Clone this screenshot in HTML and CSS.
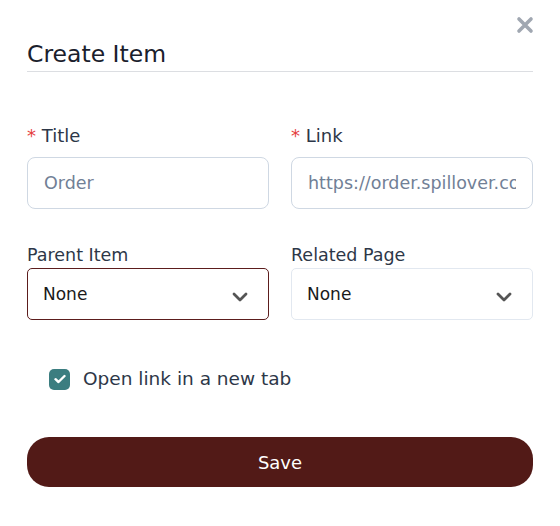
FILE: index.html
```html
<!DOCTYPE html>
<html lang="en">
<head>
  <meta charset="UTF-8" />
  <meta name="viewport" content="width=device-width, initial-scale=1.0" />
  <title>Create Item</title>
  <link rel="stylesheet" href="styles.css">
</head>
<body>
  <div class="modal">
    <button class="close" aria-label="Close">
      <svg width="18" height="18" viewBox="0 0 18 18">
        <path d="M3 3 L15 15 M15 3 L3 15" stroke="#a0a7b1" stroke-width="3.6" stroke-linecap="round" />
      </svg>
    </button>

    <div class="header">
      <h2>Create Item</h2>
    </div>

    <form class="form">
      <div class="field">
        <label><span class="req">*</span> Title</label>
        <input class="input" type="text" value="Order" />
      </div>
      <div class="field">
        <label><span class="req">*</span> Link</label>
        <input class="input" type="text" value="https://order.spillover.com/" />
      </div>

      <div class="field second">
        <label>Parent Item</label>
        <div class="select focused">
          <span>None</span>
          <svg class="chev" width="16" height="10" viewBox="0 0 16 10">
            <path d="M2 2 L8 8 L14 2" fill="none" stroke="#555" stroke-width="2.8" stroke-linecap="round" stroke-linejoin="round" />
          </svg>
        </div>
      </div>
      <div class="field second">
        <label>Related Page</label>
        <div class="select">
          <span>None</span>
          <svg class="chev" width="16" height="10" viewBox="0 0 16 10">
            <path d="M2 2 L8 8 L14 2" fill="none" stroke="#555" stroke-width="2.8" stroke-linecap="round" stroke-linejoin="round" />
          </svg>
        </div>
      </div>

      <label class="check">
        <span class="box">
          <svg width="12" height="10" viewBox="0 0 12 10">
            <path d="M1.5 5.2 L4.5 8 L10.5 2" fill="none" stroke="#fff" stroke-width="2.4" stroke-linecap="round" stroke-linejoin="round" />
          </svg>
        </span>
        Open link in a new tab
      </label>

      <button type="button" class="save">Save</button>
    </form>
  </div>
</body>
</html>
```

FILE: styles.css
```css
body {
  font-family: "DejaVu Sans", sans-serif;
  background: #ffffff;
  color: #2d3748;
  margin: 0;
}

.modal {
  position: relative;
  width: 506px;
  padding: 38px 27px 0;
}

.close {
  position: absolute;
  top: 16px;
  right: 26px;
  background: none;
  border: none;
  padding: 0;
  cursor: pointer;
  line-height: 0;
}

.header {
  border-bottom: 1px solid #dcdee2;
  padding-bottom: 1px;
}
.header h2 {
  margin: 0;
  font-size: 23.5px;
  font-weight: 400;
  line-height: 32px;
  color: #1a202c;
}

.form {
  display: grid;
  grid-template-columns: minmax(0, 1fr) minmax(0, 1fr);
  column-gap: 22px;
  margin-top: 52px;
}

.field {
  display: flex;
  flex-direction: column;
  min-width: 0;
}
.field label {
  font-size: 18px;
  line-height: 24px;
  color: #2d3748;
  margin-bottom: 9px;
}
.field.second {
  margin-top: 34px;
}
.field.second label {
  font-size: 17.5px;
  margin-bottom: 1px;
}
.req {
  color: #e53e3e;
}

.input {
  width: 100%;
  height: 52px;
  box-sizing: border-box;
  border: 1px solid #cfd8e3;
  border-radius: 8px;
  padding: 0 16px;
  font-family: inherit;
  font-size: 17.5px;
  color: #718096;
  background: #fff;
  outline: none;
}

.select {
  height: 52px;
  box-sizing: border-box;
  border: 1px solid #e2e8f0;
  border-radius: 5px;
  padding: 0 20px 0 15px;
  display: flex;
  align-items: center;
  justify-content: space-between;
  font-size: 17px;
  color: #1a1a1a;
}
.select.focused {
  border-color: #5c1d1d;
}
.chev {
  margin-top: 6px;
}

.check {
  grid-column: 1 / -1;
  display: flex;
  align-items: center;
  gap: 13px;
  margin: 48px 0 0 22px;
  font-size: 18.5px;
  line-height: 22px;
  color: #2d3748;
}
.box {
  width: 21px;
  height: 21px;
  border-radius: 5px;
  background: #3b7d80;
  display: flex;
  align-items: center;
  justify-content: center;
}

.save {
  grid-column: 1 / -1;
  margin-top: 47px;
  height: 50px;
  border: none;
  border-radius: 22px;
  background: #521a17;
  color: #ffffff;
  font-family: inherit;
  font-size: 18px;
  cursor: pointer;
}
```
